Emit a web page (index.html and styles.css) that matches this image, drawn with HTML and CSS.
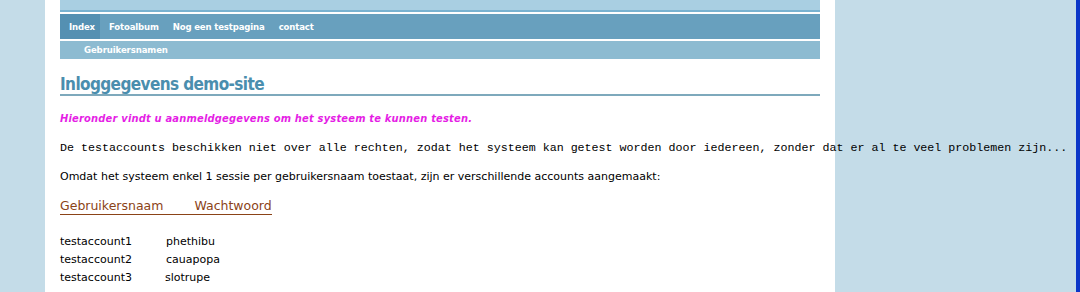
FILE: index.html
```html
<!DOCTYPE html>
<html lang="nl">
<head>
<meta charset="UTF-8" />
<title>Inloggegevens demo-site</title>
<link rel="stylesheet" href="styles.css">
</head>
<body>
  <div class="page">
    <div class="topbar"></div>
    <ul class="nav">
      <li class="active">Index</li>
      <li>Fotoalbum</li>
      <li>Nog een testpagina</li>
      <li>contact</li>
    </ul>
    <div class="subnav">Gebruikersnamen</div>

    <h1>Inloggegevens demo-site</h1>
    <p class="intro">Hieronder vindt u aanmeldgegevens om het systeem te kunnen testen.</p>
    <p class="mono">De testaccounts beschikken niet over alle rechten, zodat het systeem kan getest worden door iedereen, zonder dat er al te veel problemen zijn...</p>
    <p class="plain">Omdat het systeem enkel 1 sessie per gebruikersnaam toestaat, zijn er verschillende accounts aangemaakt:</p>

    <div class="accounts-head"><span>Gebruikersnaam</span><span>Wachtwoord</span></div>
    <div class="accounts">
      <span>testaccount1</span><span>phethibu</span>
      <span>testaccount2</span><span>cauapopa</span>
      <span>testaccount3</span><span class="shift">slotrupe</span>
    </div>
  </div>
</body>
</html>
```

FILE: styles.css
```css
html, body {
  margin: 0;
  height: 100%;
}
body {
  background: #c4dce8;
  border-right: 4px solid #0b36c8;
  font-family: "DejaVu Sans", Verdana, sans-serif;
  overflow: hidden;
}
.page {
  margin-left: 45px;
  width: 760px;
  min-height: 100%;
  padding: 0 15px;
  background: #fff;
}
.topbar {
  height: 10px;
  background: #a9cfe2;
  border-bottom: 2px solid #79b2d0;
}
.nav {
  list-style: none;
  margin: 2px 0 0;
  padding: 0;
  height: 25px;
  display: flex;
  background: #68a0be;
}
.nav li {
  padding: 0 5px 0 9px;
  line-height: 25px;
  color: #fff;
  font-family: "DejaVu Sans Condensed", "DejaVu Sans", sans-serif;
  font-weight: bold;
  font-size: 9.5px;
  letter-spacing: -0.15px;
}
.nav li.active {
  background: #5490b2;
}
.subnav {
  margin-top: 2px;
  height: 18px;
  line-height: 18px;
  padding-left: 24px;
  background: #8dbbd1;
  color: #fff;
  font-family: "DejaVu Sans Condensed", "DejaVu Sans", sans-serif;
  font-weight: bold;
  font-size: 9.5px;
  letter-spacing: -0.1px;
}
h1 {
  margin: 15px 0 0;
  padding-top: 1px;
  border-bottom: 2px solid #7ea9bc;
  color: #4a8eae;
  font-family: "DejaVu Sans Condensed", "DejaVu Sans", sans-serif;
  font-size: 17px;
  line-height: 19px;
  font-weight: bold;
  letter-spacing: -0.6px;
}
.intro {
  margin: 15px 0 0;
  color: #e51ee5;
  font-family: "DejaVu Sans Condensed", "DejaVu Sans", sans-serif;
  font-size: 11px;
  font-weight: bold;
  font-style: italic;
  line-height: 16px;
  letter-spacing: 0.2px;
}
.mono {
  margin: 13px 0 0;
  font-family: "Liberation Mono", "Courier New", monospace;
  font-size: 11.66px;
  line-height: 16px;
  white-space: nowrap;
  color: #000;
}
.plain {
  margin: 13px 0 0;
  font-size: 11px;
  line-height: 16px;
}
.accounts-head {
  display: inline-flex;
  gap: 31px;
  margin-top: 12px;
  color: #8b4317;
  font-size: 12.5px;
  line-height: 17px;
  border-bottom: 1px solid #8b4317;
}
.accounts {
  display: grid;
  grid-template-columns: 106px auto;
  margin-top: 18px;
  font-size: 11px;
  line-height: 18px;
}
.accounts .shift {
  margin-left: -1px;
}
```
